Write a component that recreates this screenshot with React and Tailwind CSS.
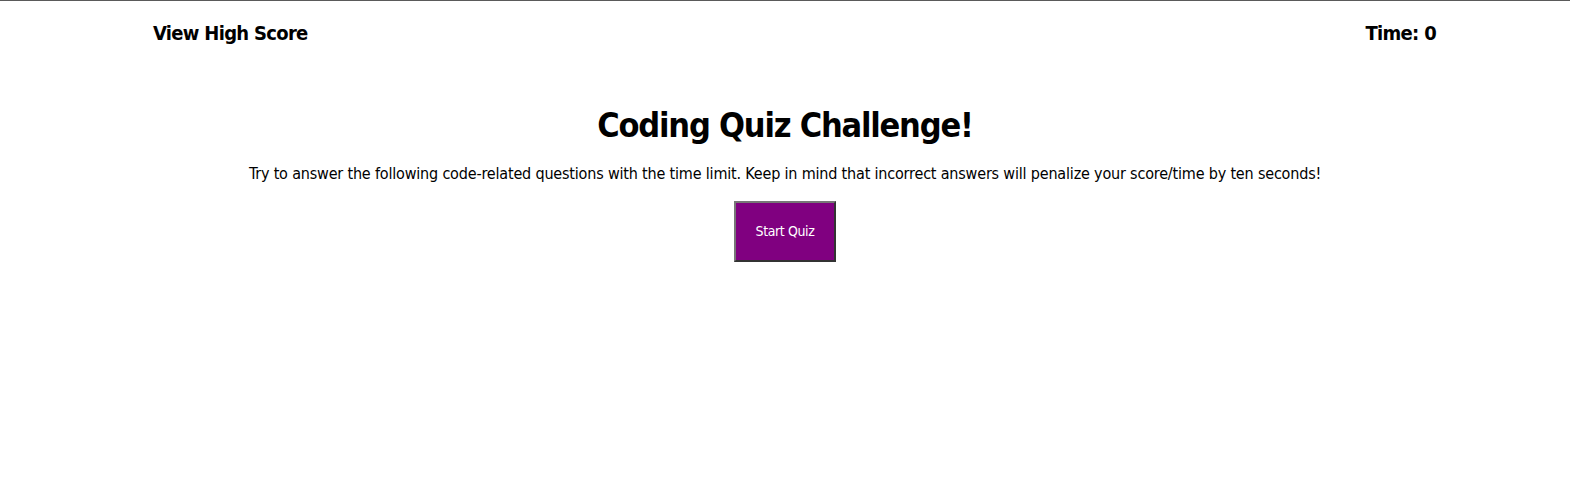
import React from "react";

export default function App() {
  return (
    <div
      className="min-h-[484px] bg-white border-t border-[#5a5a5a] text-black"
      style={{ fontFamily: '"DejaVu Sans Condensed", "DejaVu Sans", Verdana, sans-serif' }}
    >
      <header className="flex items-center justify-between pl-[153px] pr-[134px] pt-[20px]">
        <a className="text-[20px] font-bold leading-[24px] tracking-[-0.7px] cursor-pointer">
          View High Score
        </a>
        <div className="text-[20px] font-bold leading-[24px] tracking-[-0.7px]">Time: 0</div>
      </header>

      <main className="flex flex-col items-center mt-[58px]">
        <h1 className="text-[34px] font-bold leading-[44px] tracking-[-1.2px]">
          Coding Quiz Challenge!
        </h1>
        <p className="mt-[17px] text-[16px] leading-[20px] tracking-[-0.18px]">
          Try to answer the following code-related questions with the time
          limit. Keep in mind that incorrect answers will penalize your
          score/time by ten seconds!
        </p>
        <button className="mt-[17px] w-[102px] h-[61px] bg-[#800080] text-white text-[14px] tracking-[-0.4px] border-2 border-t-[#777777] border-l-[#777777] border-b-[#333333] border-r-[#333333]">
          Start Quiz
        </button>
      </main>
    </div>
  );
}
